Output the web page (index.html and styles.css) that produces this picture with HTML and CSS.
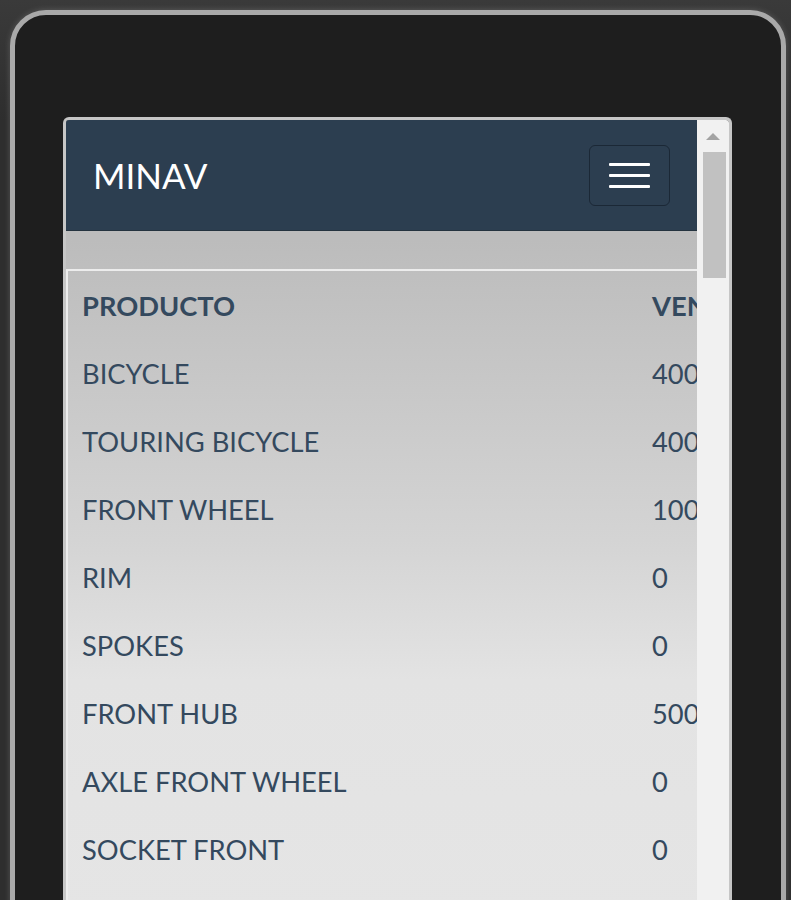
FILE: index.html
```html
<!DOCTYPE html>
<html lang="es">
<head>
<meta charset="utf-8">
<title>MINAV</title>
<link rel="stylesheet" href="styles.css">
</head>
<body>
<div class="phone">
  <div class="screen">
    <div class="content">
      <nav class="navbar">
        <span class="brand">MINAV</span>
        <button class="toggle" type="button" aria-label="Menu">
          <span class="bar"></span>
          <span class="bar"></span>
          <span class="bar"></span>
        </button>
      </nav>
      <div class="body-area">
        <div class="panel">
          <div class="row head"><span class="cell">PRODUCTO</span><span class="cell">VENTAS</span></div>
          <div class="row"><span class="cell">BICYCLE</span><span class="cell">4000</span></div>
          <div class="row"><span class="cell">TOURING BICYCLE</span><span class="cell">4000</span></div>
          <div class="row"><span class="cell">FRONT WHEEL</span><span class="cell">1000</span></div>
          <div class="row"><span class="cell">RIM</span><span class="cell">0</span></div>
          <div class="row"><span class="cell">SPOKES</span><span class="cell">0</span></div>
          <div class="row"><span class="cell">FRONT HUB</span><span class="cell">5000</span></div>
          <div class="row"><span class="cell">AXLE FRONT WHEEL</span><span class="cell">0</span></div>
          <div class="row"><span class="cell">SOCKET FRONT</span><span class="cell">0</span></div>
          <div class="row"><span class="cell">BEARING</span><span class="cell">0</span></div>
        </div>
      </div>
    </div>
    <div class="scrollbar">
      <span class="arrow"></span>
      <span class="thumb"></span>
    </div>
  </div>
</div>
</body>
</html>
```

FILE: styles.css
```css
html, body {
  margin: 0;
  padding: 0;
}
body {
  width: 791px;
  height: 900px;
  overflow: hidden;
  background: linear-gradient(#3a3a3a, #2e2e2e 120px, #2e2e2e);
  font-family: Lato, "Liberation Sans", sans-serif;
}
.phone {
  margin: 10px 0 0 10px;
  width: 776px;
  height: 1000px;
  box-sizing: border-box;
  border: 5px solid #a9a9a9;
  border-radius: 36px;
  background: #1e1e1e;
  box-shadow: 0 0 6px rgba(255, 255, 255, 0.18);
  padding: 102px 0 0 48px;
}
.screen {
  width: 669px;
  height: 900px;
  box-sizing: border-box;
  border: 3px solid #c6c6c6;
  border-bottom: none;
  border-radius: 6px 6px 0 0;
  display: flex;
  overflow: hidden;
}
.content {
  flex: 1;
  min-width: 0;
  overflow: hidden;
  background: linear-gradient(#bcbcbc 0px, #bcbcbc 120px, #d4d4d4 420px, #e3e3e3 560px, #e5e5e5 800px);
}
.navbar {
  height: 110px;
  background: #2c3e50;
  border-bottom: 1px solid #24333f;
  display: flex;
  align-items: center;
  justify-content: space-between;
  padding: 0 27px;
}
.brand {
  color: #ffffff;
  font-size: 35px;
  font-weight: 400;
  margin-top: -1px;
}
.toggle {
  width: 81px;
  height: 61px;
  margin-top: 1px;
  background: #2c3e50;
  border: 1px solid #1b2836;
  border-radius: 6px;
  display: flex;
  flex-direction: column;
  align-items: center;
  justify-content: center;
  gap: 8px;
  padding: 0;
}
.bar {
  display: block;
  width: 41px;
  height: 3px;
  border-radius: 1px;
  background: #ffffff;
}
.body-area {
  padding-top: 38px;
}
.panel {
  border-top: 2px solid #ececec;
  border-left: 2px solid #ececec;
  width: 700px;
  color: #34495e;
  font-size: 27.3px;
}
.row {
  display: grid;
  grid-template-columns: 570px 130px;
  height: 68px;
  align-items: center;
}
.cell {
  padding-left: 14px;
  white-space: nowrap;
  overflow: hidden;
}
.head {
  font-weight: 700;
}
.scrollbar {
  width: 32px;
  flex: none;
  background: #f1f1f1;
  display: flex;
  flex-direction: column;
  align-items: center;
}
.arrow {
  margin-top: 13px;
  width: 0;
  height: 0;
  border-left: 7px solid transparent;
  border-right: 7px solid transparent;
  border-bottom: 7px solid #a3a3a3;
}
.thumb {
  margin-top: 12px;
  width: 23px;
  height: 126px;
  background: #c1c1c1;
  margin-left: 3px;
}
```
